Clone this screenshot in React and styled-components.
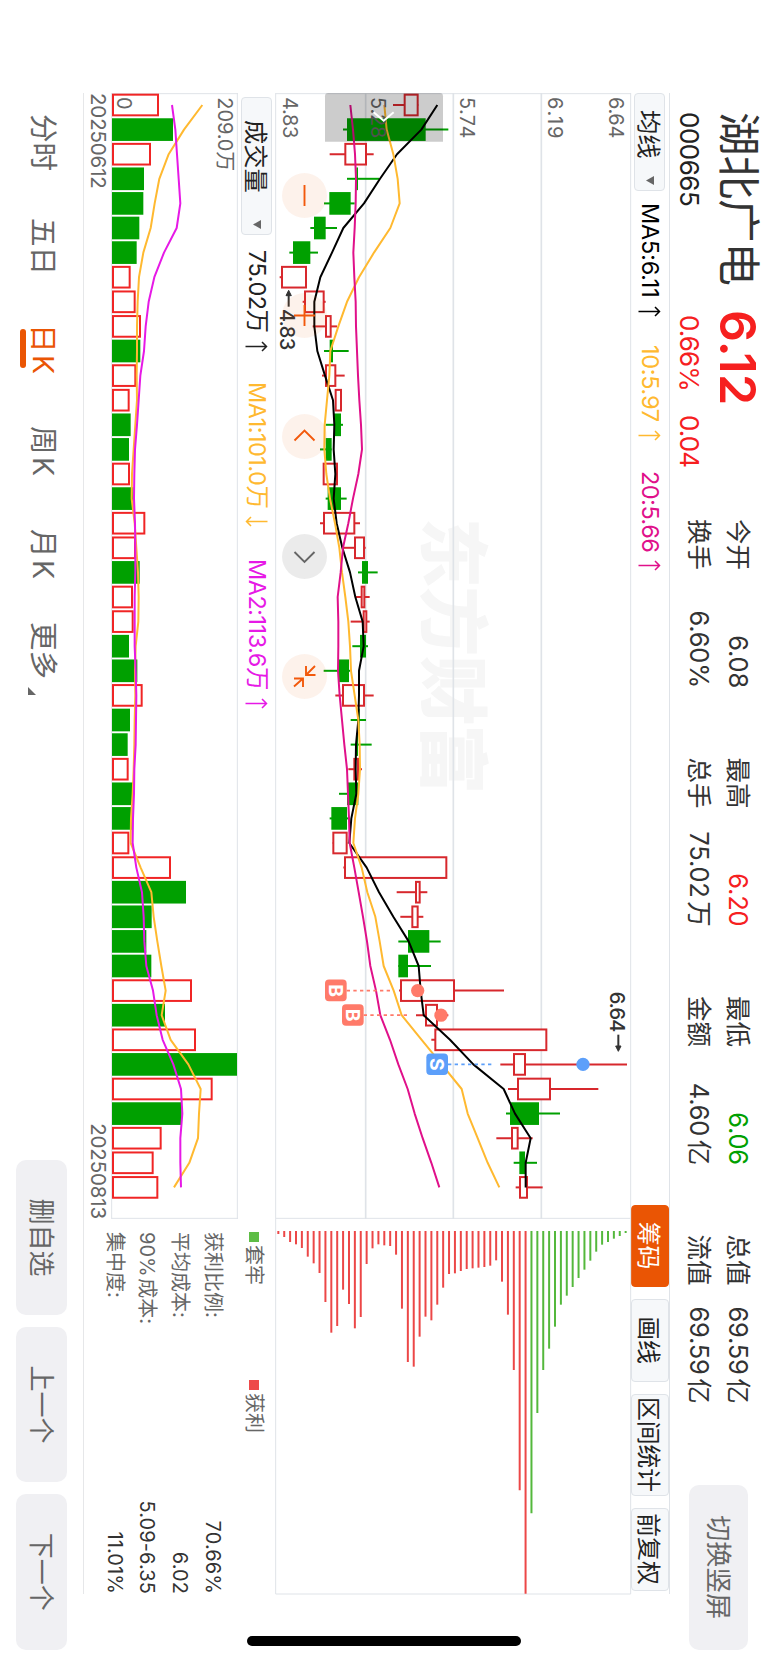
import React from "react";
import styled, { createGlobalStyle, css } from "styled-components";

const GlobalStyle = createGlobalStyle`
  *, *::before, *::after { box-sizing: border-box; }
  body { margin: 0; background: #fff; }
`;

const FONT = `Inter, "Noto Sans CJK SC", sans-serif`;
const RED = "#f6201f";
const GREEN = "#00a000";
const ORANGE = "#ea5504";
const AMBER = "#ffb930";
const PINK = "#e0108a";
const MAGENTA = "#e619e6";
const LINE = "#dfe3e8";

/* ---------- data: chart units are thirds of a pixel above each chart's base ---------- */

// [low, bodyLow, bodyHigh, high, rising, volume]
const CANDLES = [
  [351, 384, 427, 427, 1, 140], [201, 213, 449, 517, 0, 183], [161, 206, 272, 293, 1, 116],
  [213, 241, 246, 309, 0, 96], [144, 160, 224, 236, 0, 94], [103, 114, 149, 183, 0, 82],
  [40, 51, 103, 126, 0, 74], [11, 16, 92, 92, 1, 55], [80, 85, 145, 149, 1, 70],
  [110, 148, 166, 183, 1, 86], [144, 161, 171, 218, 0, 85], [138, 148, 180, 206, 1, 72],
  [177, 177, 197, 197, 1, 52], [149, 174, 195, 201, 0, 56], [132, 149, 167, 167, 0, 51],
  [141, 141, 185, 185, 1, 53], [149, 155, 195, 212, 0, 64], [132, 142, 237, 252, 1, 99],
  [200, 235, 266, 269, 1, 71], [246, 258, 276, 305, 0, 83], [240, 255, 267, 281, 1, 62],
  [224, 261, 273, 281, 1, 64], [229, 252, 270, 276, 0, 51], [143, 189, 219, 222, 0, 76],
  [178, 199, 266, 293, 1, 91], [224, 245, 251, 270, 0, 54], [224, 240, 246, 287, 0, 47],
  [217, 233, 248, 258, 1, 49], [189, 213, 247, 247, 0, 63], [161, 166, 213, 220, 0, 61],
  [170, 170, 214, 214, 1, 51], [202, 205, 513, 513, 1, 176], [362, 418, 433, 454, 1, 222],
  [373, 407, 427, 442, 1, 119], [367, 396, 460, 494, 0, 103], [367, 367, 396, 465, 0, 118],
  [369, 373, 536, 684, 1, 239], [420, 448, 485, 517, 1, 159], [466, 476, 813, 813, 1, 251],
  [673, 712, 749, 1053, 1, 375], [696, 724, 824, 967, 1, 301], [690, 702, 789, 852, 0, 209],
  [661, 706, 727, 770, 1, 148], [713, 730, 747, 783, 0, 124], [719, 730, 755, 800, 1, 138],
];
// Indices of the sessions whose volume bar is filled green.
const VOLUME_DOWN = new Set([1, 3, 4, 5, 6, 10, 13, 14, 16, 19, 22, 23, 25, 26, 28, 29, 32, 33, 34, 35, 37, 39, 41]);

const MA5 = [484, 436, 363, 312, 264, 202, 168, 133, 115, 115, 124, 147, 171, 175, 173, 178, 173, 182, 199, 222, 238, 260, 263, 249, 249, 247, 240, 239, 241, 226, 220, 272, 309, 352, 398, 428, 434, 443, 522, 592, 683, 717, 764, 749, 749];
const MA10 = [325, 332, 352, 365, 371, 343, 294, 249, 213, 187, 163, 160, 153, 146, 145, 151, 162, 177, 190, 198, 208, 217, 222, 225, 236, 247, 251, 252, 247, 237, 232, 257, 274, 298, 311, 323, 353, 377, 437, 497, 557, 575, 605, 635, 670];
const MA20 = [223, 231, 237, 240, 239, 236, 232, 235, 239, 240, 243, 246, 250, 255, 258, 247, 231, 217, 201, 194, 185, 187, 187, 186, 191, 198, 205, 213, 216, 219, 221, 235, 248, 261, 273, 283, 300, 313, 342, 367, 395, 416, 440, 466, 490];
const VMA1 = [271, 216, 170, 142, 128, 116, 94, 81, 77, 75, 75, 74, 75, 70, 65, 60, 59, 68, 73, 78, 80, 79, 71, 69, 70, 68, 67, 65, 62, 57, 56, 86, 118, 125, 136, 148, 161, 149, 176, 229, 266, 261, 258, 232, 186];
const VMA2 = [180, 190, 195, 200, 205, 194, 156, 127, 110, 101, 96, 85, 80, 75, 69, 67, 66, 69, 70, 70, 68, 68, 68, 71, 73, 72, 71, 67, 66, 63, 62, 73, 90, 95, 97, 103, 123, 134, 152, 184, 207, 211, 205, 205, 207];

const CHIPS_PROFIT = [9, 18, 33, 40, 51, 77, 97, 126, 213, 305, 285, 176, 219, 292, 258, 99, 52, 40, 43, 45, 71, 233, 393, 407, 317, 257, 268, 221, 170, 129, 127, 120, 114, 112, 110, 108, 104, 88, 152, 251, 417, 778, 1090];
const CHIPS_LOSS = [847, 546, 417, 353, 287, 221, 194, 168, 141, 116, 89, 62, 41, 33, 23, 15, 6];

const STATS = [
  { label: "今开", value: "6.08" },
  { label: "最高", value: "6.20", color: RED },
  { label: "最低", value: "6.06", color: GREEN },
  { label: "总值", value: "69.59", unit: "亿" },
  { label: "换手", value: "6.60%" },
  { label: "总手", value: "75.02", unit: "万" },
  { label: "金额", value: "4.60", unit: "亿" },
  { label: "流值", value: "69.59", unit: "亿" },
];

const centre = (i) => 36 + 73.8 * i;
const points = (values, base) => values.map((v, i) => `${centre(i)},${base - v}`).join(" ");

/* ---------- layout ---------- */

const Screen = styled.div`
  width: 768px;
  height: 1663px;
  overflow: hidden;
  background: #fff;
`;

const Landscape = styled.div`
  display: flex;
  width: 1663px;
  height: 768px;
  transform: translateX(768px) rotate(90deg);
  transform-origin: 0 0;
  padding-left: 93px;
  font-family: ${FONT};
  color: #333;
  white-space: nowrap;
  line-height: 1;
`;

const Page = styled.div`
  display: grid;
  grid-template-rows: 98px 39px 547px 1px 83px;
  width: 1557px;
  flex: none;
`;

const HomeRail = styled.div`
  display: flex;
  align-items: center;
  width: 13px;
`;

const HomeIndicator = styled.div`
  flex: none;
  width: 10px;
  height: 274px;
  margin-left: -14px;
  border-radius: 5px;
  background: #000;
`;

const Header = styled.header`
  display: flex;
`;

const Quote = styled.div`
  display: grid;
  grid-template-rows: 60px 38px;
  width: 426px;
  padding-left: 19px;
`;

const QuoteRow = styled.div`
  display: flex;
  align-items: center;
`;

const StockName = styled.h1`
  width: 198px;
  margin: 0;
  font-size: 43.5px;
  font-weight: 400;
`;

const Price = styled.strong`
  font-size: 50px;
  font-weight: 600;
  letter-spacing: 0.3px;
  color: ${RED};
`;

const Code = styled.span`
  width: 203px;
  font-size: 26px;
  letter-spacing: -0.5px;
  color: #222;
`;

const Change = styled.span`
  width: ${(p) => p.$w}px;
  font-size: 26px;
  letter-spacing: -0.9px;
  color: ${RED};
`;

const StatGrid = styled.dl`
  display: grid;
  grid-template-columns: repeat(4, 169px);
  grid-template-rows: 39px 39px;
  column-gap: 69.5px;
  margin: 0;
  padding-top: 10px;
`;

const Stat = styled.div`
  display: flex;
  align-items: center;
  justify-content: space-between;
  font-size: 25.5px;
`;

const StatLabel = styled.dt`
  margin: 0;
`;

const StatValue = styled.dd`
  margin: 0;
  letter-spacing: -0.2px;
  color: ${(p) => p.$color || "#333"};
`;

const Unit = styled.span`
  margin-left: 3.5px;
`;

const SoftButton = styled.button`
  width: ${(p) => p.$w}px;
  height: ${(p) => p.$h}px;
  padding: 0 0 4px;
  border: 0;
  border-radius: 10px;
  background: #f0f0f3;
  color: #666;
  font: 26px ${FONT};
`;

const HeaderAction = styled.div`
  margin: 20px 0 0 81px;
`;

const Toolbar = styled.div`
  display: flex;
  align-items: center;
  width: 1501px;
  border-top: 1px solid ${LINE};
`;

const Pill = styled.button`
  display: flex;
  align-items: center;
  justify-content: space-between;
  width: ${(p) => p.$w}px;
  height: 31px;
  padding: 0 5px 1px ${(p) => p.$left}px;
  border: 1px solid ${LINE};
  border-radius: 4px;
  background: #f6f8fa;
  color: #222;
  font: 24.3px ${FONT};
`;

const Readout = styled.span`
  display: flex;
  align-items: center;
  gap: 8px;
  width: ${(p) => p.$w}px;
  margin-left: ${(p) => p.$indent || 0}px;
  flex: none;
  font-size: 23.5px;
  letter-spacing: ${(p) => p.$tracking ?? -0.5}px;
  color: ${(p) => p.$color};
`;

const ToolButtons = styled.div`
  display: flex;
  gap: 12px;
  margin: 0 3.5px 0 auto;
`;

const ToolButton = styled.button`
  width: ${(p) => p.$w}px;
  height: 38px;
  padding: 0 0 3px;
  border: 1px solid ${LINE};
  border-radius: 4px;
  background: #f6f8fa;
  color: #222;
  font: 23.8px ${FONT};
  ${(p) => p.$active && css`
    border-color: ${ORANGE};
    background: ${ORANGE};
    color: #fff;
  `}
`;

const Panels = styled.div`
  display: grid;
  grid-template-columns: 1126px 375px;
  grid-template-rows: 355px 192px;
  width: 1501px;
`;

const PricePane = styled.section`
  position: relative;
`;

const Drawing = styled.svg`
  display: block;
  overflow: visible;
`;

const ZoomButtons = styled.div`
  position: absolute;
  left: 80px;
  bottom: 6.5px;
  display: flex;
  gap: 75.3px;
`;

const ZoomButton = styled.button`
  width: 45px;
  height: 45px;
  padding: 0;
  border: 0;
  border-radius: 50%;
  background: ${(p) => (p.$muted ? "rgba(0,0,0,.08)" : "rgba(234,85,4,.08)")};
  color: ${(p) => (p.$muted ? "#666" : "#f2590c")};
`;

const VolumePane = styled.section`
  display: grid;
  grid-template-rows: 38px 126px 28px;
`;

const VolumeHead = styled.div`
  display: flex;
  align-items: center;
  padding-left: 4px;
`;

const Dates = styled.div`
  display: flex;
  justify-content: space-between;
  align-items: center;
  font-size: 20.5px;
  letter-spacing: -0.15px;
  color: #666;
`;

const ChipInfo = styled.section`
  display: flex;
  flex-direction: column;
  padding: 10px 0 0 13px;
  color: #666;
  font-size: 20px;
`;

const Legend = styled.div`
  display: grid;
  grid-template-columns: 148px 1fr;
  height: 24px;
  flex: none;
  margin-bottom: 13px;
`;

const LegendItem = styled.span`
  display: flex;
  align-items: center;
  gap: 3px;
  &::before {
    content: "";
    width: 10px;
    height: 10px;
    background: ${(p) => p.$color};
  }
`;

const InfoRow = styled.div`
  display: flex;
  align-items: center;
  justify-content: space-between;
  flex: none;
  height: 32.7px;
  word-spacing: -4px;
`;

const InfoValue = styled.span`
  color: #333;
  letter-spacing: 0.1px;
`;

const FooterRule = styled.div`
  width: 1501px;
  background: #e6e7e9;
`;

const Footer = styled.footer`
  display: flex;
  align-items: center;
`;

const Tabs = styled.nav`
  display: flex;
  width: 1066.7px;
  padding: 0 0 2px 21px;
`;

const Tab = styled.a`
  position: relative;
  width: ${(p) => p.$w}px;
  font-size: 28.5px;
  color: ${(p) => (p.$active ? ORANGE : "#666")};
  ${(p) => p.$active && css`
    &::after {
      content: "";
      position: absolute;
      left: 5px;
      bottom: -8px;
      width: 39px;
      height: 5.5px;
      border-radius: 3px;
      background: ${ORANGE};
    }
  `}
`;

const KLetter = styled.span`
  margin-left: 2.5px;
`;

const MoreMark = styled.svg`
  margin: 0 0 -5px 8px;
`;

const Pager = styled.div`
  display: flex;
  gap: 11.7px;
`;

/* ---------- small drawings ---------- */

const Caret = () => (
  <svg width="9" height="8" viewBox="0 0 9 8"><path d="M0 0h9L4.5 8z" fill="#666" /></svg>
);

const Trend = ({ down }) => (
  <svg width="11" height="23" viewBox="0 0 11 23" fill="none" stroke="currentColor" strokeWidth="1.5">
    <path d={down ? "M5.5 0.5v21M1 17l4.5 4.5L10 17" : "M5.5 22.5v-21M1 6l4.5-4.5L10 6"} />
  </svg>
);

const icons = {
  minus: "M12 22.5h21",
  plus: "M12 22.5h21M22.5 12v21",
  left: "M26.5 12.5l-10 10l10 10",
  right: "M18 12.5l10 10l-10 10",
  collapse: "M12 12l9 9M12 21h9v-9.5M32.5 33l-8-9M24.5 33v-9h8.5",
};

const ZoomIcon = ({ name }) => (
  <Drawing width="45" height="45" viewBox="0 0 45 45" fill="none" stroke="currentColor" strokeWidth="1.9">
    <path d={icons[name]} />
  </Drawing>
);

/* ---------- charts ---------- */

const Candle = ({ data, i }) => {
  const [low, bottom, top, high, rising] = data;
  const x = centre(i);
  const color = rising ? "#d7282d" : GREEN;
  return (
    <g stroke={color} strokeWidth="6">
      <path d={`M${x} ${1065 - low}V${1065 - high}`} />
      {rising ? (
        <rect x={x - 31} y={1065 - top + 2} width="62" height={Math.max(top - bottom - 4, 2)} fill="#fff" />
      ) : (
        <rect x={x - 34} y={1065 - top} width="68" height={top - bottom} fill={color} stroke="none" />
      )}
    </g>
  );
};

const Trade = ({ i, badge, dashEnd, dot, kind }) => {
  const color = kind === "B" ? "#ff7a69" : "#5c9ffa";
  const x = centre(i);
  return (
    <g>
      <path d={`M${x} ${1065 - badge - 65}V${1065 - dashEnd}`} stroke={color} strokeWidth="5" strokeDasharray="10 10" />
      <circle cx={x} cy={1065 - dot} r="20" fill={color} />
      <rect x={x - 33} y={1065 - badge - 65} width="65" height="65" rx="12" fill={color} />
      <text x={x} y={1065 - badge - 12} fontSize="58" fontWeight="700" textAnchor="middle" fill="#fff">{kind}</text>
    </g>
  );
};

const AXIS = [["4.83", 22], ["5.28", 286], ["5.74", 553], ["6.19", 815], ["6.64", 1000]];

const PriceChart = () => (
  <Drawing width="1126" height="355" viewBox="0 0 3378 1065" fontFamily={FONT}>
    <text x="1274" y="611" fontSize="210" fontWeight="900" fill="#f6f6f6" textLength="830">东方财富</text>
    <g stroke={LINE} strokeWidth="5" fill="none">
      <path d="M0 796H3378M0 533H3378M0 269H3378" />
      <path d="M2 0V1065M0 1066H3378M0 1H3378M3376 0V1065" strokeWidth="3" />
    </g>
    {CANDLES.map((c, i) => <Candle key={i} data={c} i={i} />)}
    <g fill="none" strokeWidth="6" strokeLinejoin="round">
      <polyline points={points(MA5, 1065)} stroke="#000" />
      <polyline points={points(MA10, 1065)} stroke={AMBER} />
      <polyline points={points(MA20, 1065)} stroke={PINK} />
    </g>
    <g fontSize="60" fill="#666">
      {AXIS.map(([t, h]) => <text key={t} x="12" y={1065 - h} textLength="124">{t}</text>)}
    </g>
    <g fontSize="60" fontWeight="500" fill="#333">
      <text x="648" y="1052" textLength="124">4.83</text>
      <text x="2696" y="62" textLength="122">6.64</text>
    </g>
    <g stroke="#333" strokeWidth="6" fill="#333">
      <path d="M602 1027H641" /><path d="M592 1027l16 -8v16z" strokeWidth="3" />
      <path d="M2825 38H2864" /><path d="M2875 38l-16 -8v16z" strokeWidth="3" />
    </g>
    <Trade i={36} kind="B" badge={147} dashEnd={342} dot={425} />
    <Trade i={37} kind="B" badge={198} dashEnd={394} dot={495} />
    <Trade i={39} kind="S" badge={451} dashEnd={649} dot={921} />
    <path d="M10 564H146V918H10Q0 918 0 908V574Q0 564 10 564Z" fill="#000" fillOpacity=".2" />
    <path d="M58 712L83 742L58 772" fill="none" stroke="#fff" strokeWidth="6" />
  </Drawing>
);

const VolumeChart = () => (
  <Drawing width="1126" height="126" viewBox="0 0 3378 378" fontFamily={FONT}>
    <path d="M2 0V378M0 2H3378M3376 0V378M0 379H3378" stroke={LINE} strokeWidth="3" />
    {CANDLES.map((c, i) => (VOLUME_DOWN.has(i) ? (
      <rect key={i} x={centre(i) - 34} y={378 - c[5]} width="68" height={c[5]} fill={GREEN} />
    ) : (
      <rect key={i} x={centre(i) - 31} y={380 - c[5]} width="62" height={c[5] - 5} fill="#fff" stroke="#f02525" strokeWidth="6" />
    )))}
    <g fill="none" strokeWidth="6" strokeLinejoin="round">
      <polyline points={points(VMA1, 378)} stroke={AMBER} />
      <polyline points={points(VMA2, 378)} stroke={MAGENTA} />
    </g>
    <g fontSize="60" fill="#666">
      <text x="13" y="61" textLength="222">209.0万</text>
      <text x="12" y="364">0</text>
    </g>
  </Drawing>
);

const ChipChart = () => {
  const level = (n) => 1065 - (7 + 17.66 * n);
  return (
    <Drawing width="375" height="355" viewBox="0 0 1125 1065" strokeWidth="6">
      <path d="M0 1H1125V1066H0" fill="none" stroke={LINE} strokeWidth="3" />
      {CHIPS_PROFIT.map((len, n) => (
        <path key={n} d={`M36 ${level(n)}h${Math.min(len, 1088)}`} stroke="#ec4747" />
      ))}
      {CHIPS_LOSS.map((len, n) => (
        <path key={n} d={`M36 ${level(n + CHIPS_PROFIT.length)}h${len}`} stroke="#54b83c" />
      ))}
    </Drawing>
  );
};

export default function App() {
  return (
    <Screen>
      <GlobalStyle />
      <Landscape>
        <Page>
          <Header>
            <Quote>
              <QuoteRow>
                <StockName>湖北广电</StockName>
                <Price>6.12</Price>
              </QuoteRow>
              <QuoteRow>
                <Code>000665</Code>
                <Change $w={100}>0.66%</Change>
                <Change $w={60}>0.04</Change>
              </QuoteRow>
            </Quote>
            <StatGrid>
              {STATS.map(({ label, value, unit, color }) => (
                <Stat key={label}>
                  <StatLabel>{label}</StatLabel>
                  <StatValue $color={color}>{value}{unit && <Unit>{unit}</Unit>}</StatValue>
                </Stat>
              ))}
            </StatGrid>
            <HeaderAction>
              <SoftButton $w={165.500} $h={59}>切换竖屏</SoftButton>
            </HeaderAction>
          </Header>

          <Toolbar>
            <Pill $w={98} $left={16}>均线<Caret /></Pill>
            <Readout $indent={12} $w={142} $tracking={-0.2} $color="#000">MA5:6.11<Trend /></Readout>
            <Readout $w={126} $tracking={-0.3} $color={AMBER}>10:5.97<Trend /></Readout>
            <Readout $w={126} $color={PINK}>20:5.66<Trend /></Readout>
            <ToolButtons>
              <ToolButton $w={82} $active>筹码</ToolButton>
              <ToolButton $w={83}>画线</ToolButton>
              <ToolButton $w={102}>区间统计</ToolButton>
              <ToolButton $w={83}>前复权</ToolButton>
            </ToolButtons>
          </Toolbar>

          <Panels>
            <PricePane>
              <PriceChart />
              <ZoomButtons>
                <ZoomButton><ZoomIcon name="minus" /></ZoomButton>
                <ZoomButton><ZoomIcon name="plus" /></ZoomButton>
                <ZoomButton><ZoomIcon name="left" /></ZoomButton>
                <ZoomButton $muted><ZoomIcon name="right" /></ZoomButton>
                <ZoomButton><ZoomIcon name="collapse" /></ZoomButton>
              </ZoomButtons>
            </PricePane>
            <ChipChart />
            <VolumePane>
              <VolumeHead>
                <Pill $w={138} $left={22}>成交量<Caret /></Pill>
                <Readout $indent={15} $w={132} $color="#222">75.02万<Trend /></Readout>
                <Readout $w={177} $color={AMBER}>MA1:101.0万<Trend down /></Readout>
                <Readout $w={177} $color={MAGENTA}>MA2:113.6万<Trend /></Readout>
              </VolumeHead>
              <VolumeChart />
              <Dates><span>20250612</span><span>20250813</span></Dates>
            </VolumePane>
            <ChipInfo>
              <Legend>
                <LegendItem $color="#5ebd46">套牢</LegendItem>
                <LegendItem $color="#ee4a4a">获利</LegendItem>
              </Legend>
              <InfoRow>获利比例:<InfoValue>70.66%</InfoValue></InfoRow>
              <InfoRow>平均成本:<InfoValue>6.02</InfoValue></InfoRow>
              <InfoRow>90% 成本:<InfoValue>5.09-6.35</InfoValue></InfoRow>
              <InfoRow>集中度:<InfoValue>11.01%</InfoValue></InfoRow>
            </ChipInfo>
          </Panels>

          <FooterRule />
          <Footer>
            <Tabs>
              <Tab $w={104}>分时</Tab>
              <Tab $w={106}>五日</Tab>
              <Tab $w={102} $active>日<KLetter>K</KLetter></Tab>
              <Tab $w={103}>周<KLetter>K</KLetter></Tab>
              <Tab $w={93}>月<KLetter>K</KLetter></Tab>
              <Tab $w={90}>更多<MoreMark width="8" height="8" viewBox="0 0 8 8"><path d="M8 0v8H0z" fill="#666" /></MoreMark></Tab>
            </Tabs>
            <Pager>
              <SoftButton $w={155.5} $h={51}>删自选</SoftButton>
              <SoftButton $w={155.5} $h={51}>上一个</SoftButton>
              <SoftButton $w={155.5} $h={51}>下一个</SoftButton>
            </Pager>
          </Footer>
        </Page>
        <HomeRail><HomeIndicator /></HomeRail>
      </Landscape>
    </Screen>
  );
}
